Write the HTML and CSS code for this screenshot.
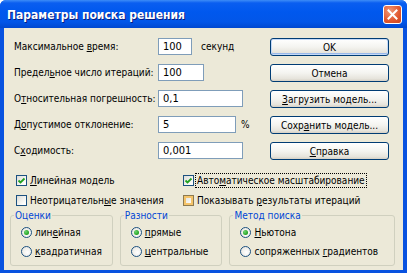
FILE: index.html
```html
<!DOCTYPE html>
<html lang="ru">
<head>
<meta charset="UTF-8">
<title>Параметры поиска решения</title>
<link rel="stylesheet" href="styles.css">
</head>
<body>
<div class="window">
    <div class="titlebar">
        <span class="title">Параметры поиска решения</span>
        <span class="close">
            <svg width="11" height="11" viewBox="0 0 11 11"><path d="M1.5 1.5 L9.5 9.5 M9.5 1.5 L1.5 9.5" stroke="#fff" stroke-width="2" stroke-linecap="square"/></svg>
        </span>
    </div>
    <div class="client">
        <div class="top">
            <div class="fields">
                <div class="row"><span class="label">Максимальное <u>в</u>ремя:</span><span class="input w-time">100</span><span class="unit">секунд</span></div>
                <div class="row"><span class="label">Предел<u>ь</u>ное число итераций:</span><span class="input w-iter">100</span></div>
                <div class="row"><span class="label">О<u>т</u>носительная погрешность:</span><span class="input w-long">0,1</span></div>
                <div class="row"><span class="label">Д<u>о</u>пустимое отклонение:</span><span class="input w-tol">5</span><span class="unit pct">%</span></div>
                <div class="row"><span class="label">С<u>х</u>одимость:</span><span class="input w-long">0,001</span></div>
            </div>
            <div class="buttons">
                <span class="btn default">OK</span>
                <span class="btn">Отмена</span>
                <span class="btn"><u>З</u>агрузить модель...</span>
                <span class="btn">Сохр<u>а</u>нить модель...</span>
                <span class="btn"><u>С</u>правка</span>
            </div>
        </div>
        <div class="checks">
            <div class="check"><span class="box on"><svg width="9" height="9" viewBox="0 0 9 9"><path d="M1.5 4.5 L3.5 6.5 L7.5 2.5" fill="none" stroke="#21a121" stroke-width="1.8"/></svg></span><span><u>Л</u>инейная модель</span></div>
            <div class="check"><span class="box on"><svg width="9" height="9" viewBox="0 0 9 9"><path d="M1.5 4.5 L3.5 6.5 L7.5 2.5" fill="none" stroke="#21a121" stroke-width="1.8"/></svg></span><span class="focus">Авто<u>м</u>атическое масштабирование</span></div>
            <div class="check"><span class="box"></span><span>Неотрицательн<u>ы</u>е значения</span></div>
            <div class="check"><span class="box hover"></span><span>Показывать <u>р</u>езультаты итераций</span></div>
        </div>
        <div class="groups">
            <fieldset class="group g-small">
                <legend>Оценки</legend>
                <div class="radio"><span class="dot on"></span><span>лин<u>е</u>йная</span></div>
                <div class="radio"><span class="dot"></span><span><u>к</u>вадратичная</span></div>
            </fieldset>
            <fieldset class="group g-small">
                <legend>Разности</legend>
                <div class="radio"><span class="dot on"></span><span><u>п</u>рямые</span></div>
                <div class="radio"><span class="dot"></span><span><u>ц</u>ентральные</span></div>
            </fieldset>
            <fieldset class="group g-wide">
                <legend>Метод поиска</legend>
                <div class="radio"><span class="dot on"></span><span><u>Н</u>ьютона</span></div>
                <div class="radio"><span class="dot"></span><span>сопряженных <u>г</u>радиентов</span></div>
            </fieldset>
        </div>
    </div>
</div>
</body>
</html>
```

FILE: styles.css
```css
body {
    margin: 0;
    background: #ffffff;
    font-family: "DejaVu Sans Condensed", "DejaVu Sans", sans-serif;
    font-size: 10px;
    color: #000;
}

u {
    text-decoration: underline;
    text-underline-offset: 1px;
}

.window {
    width: 407px;
    height: 273px;
    background: #0852e0;
    border-radius: 6px 6px 0 0;
    display: flex;
    flex-direction: column;
}

.titlebar {
    height: 28px;
    flex: none;
    display: flex;
    align-items: center;
    justify-content: space-between;
    padding: 0 5px 0 7px;
    background: linear-gradient(#3d8cf7 0, #0a5ef0 3px, #0058ee 12px, #0256e8 22px, #0048d0 28px);
    border-radius: 6px 6px 0 0;
}

.title {
    color: #fff;
    font-weight: bold;
    font-size: 12px;
    text-shadow: 1px 1px 0 #0a1e80;
    padding-top: 1px;
}

.close {
    width: 19px;
    height: 19px;
    box-sizing: border-box;
    border: 1px solid #fff;
    border-radius: 3px;
    background: radial-gradient(circle at 35% 30%, #f09878 0, #e0562e 60%, #c84420 100%);
    display: flex;
    align-items: center;
    justify-content: center;
}

.client {
    flex: 1;
    margin: 0 4px 3px 4px;
    background: #ece9d8;
    padding: 10px 8px 0 10px;
}

/* fields + buttons */
.top {
    display: flex;
    justify-content: space-between;
}

.fields {
    display: flex;
    flex-direction: column;
    gap: 9px;
}

.row {
    display: flex;
    align-items: center;
    height: 17px;
    white-space: nowrap;
}

.label {
    width: 144px;
    flex: none;
}

.input {
    height: 17px;
    box-sizing: border-box;
    border: 1px solid #7f9db9;
    background: #fff;
    padding: 0 4px;
    line-height: 15px;
    font-size: 11px;
}

.w-time { width: 34px; }
.w-iter { width: 46px; }
.w-long { width: 85px; }
.w-tol { width: 78px; }

.unit {
    margin-left: 9px;
}

.pct {
    margin-left: 5px;
}

.buttons {
    display: flex;
    flex-direction: column;
    gap: 8px;
    margin-right: 6px;
}

.btn {
    width: 119px;
    height: 18px;
    box-sizing: border-box;
    border: 1px solid #003c74;
    border-radius: 3px;
    background: linear-gradient(#ffffff 0, #f4f4f0 50%, #e6e4dc 85%, #d6d0c5 100%);
    display: flex;
    align-items: center;
    justify-content: center;
    white-space: nowrap;
}

.btn.default {
    box-shadow: inset 0 0 0 1px #c4d9f7, inset 0 -1px 0 1px #98b8ea;
}

/* check boxes */
.checks {
    display: grid;
    grid-template-columns: 167px 1fr;
    row-gap: 3px;
    margin-top: 12px;
    padding-left: 2px;
    white-space: nowrap;
}

.check {
    display: flex;
    align-items: center;
    height: 17px;
}

.box {
    width: 11px;
    height: 11px;
    box-sizing: border-box;
    border: 1px solid #1c5180;
    background: linear-gradient(135deg, #dcdcd7 0, #fdfdfb 80%);
    margin-right: 3px;
    display: flex;
    align-items: center;
    justify-content: center;
}

.box.hover {
    border-color: #8c7a50;
    box-shadow: inset 0 0 0 2px #f5c46a;
}

.focus {
    outline: 1px dotted #000;
    outline-offset: 1px;
}

/* group boxes */
.groups {
    display: flex;
    gap: 7px;
    margin-left: -4px;
}

.group {
    margin: 0;
    height: 57px;
    box-sizing: border-box;
    border: 1px solid #d0d0bf;
    border-radius: 3px;
    padding: 2px 0 0 10px;
    display: flex;
    flex-direction: column;
    gap: 2px;
    white-space: nowrap;
}

.g-small { width: 103px; }
.g-wide { width: 166px; }

.group legend {
    color: #0046d5;
    padding: 0 1px;
    margin-left: -7px;
    line-height: 13px;
}

.radio {
    display: flex;
    align-items: center;
    height: 17px;
}

.dot {
    width: 11px;
    height: 11px;
    box-sizing: border-box;
    border: 1px solid #1c5180;
    border-radius: 50%;
    background: radial-gradient(circle at 60% 60%, #ffffff 0, #e4e2da 100%);
    margin-right: 3px;
    display: flex;
    align-items: center;
    justify-content: center;
}

.dot.on::after {
    content: "";
    width: 5px;
    height: 5px;
    border-radius: 50%;
    background: radial-gradient(circle at 35% 35%, #6fd66f 0, #21a121 70%);
}
```
